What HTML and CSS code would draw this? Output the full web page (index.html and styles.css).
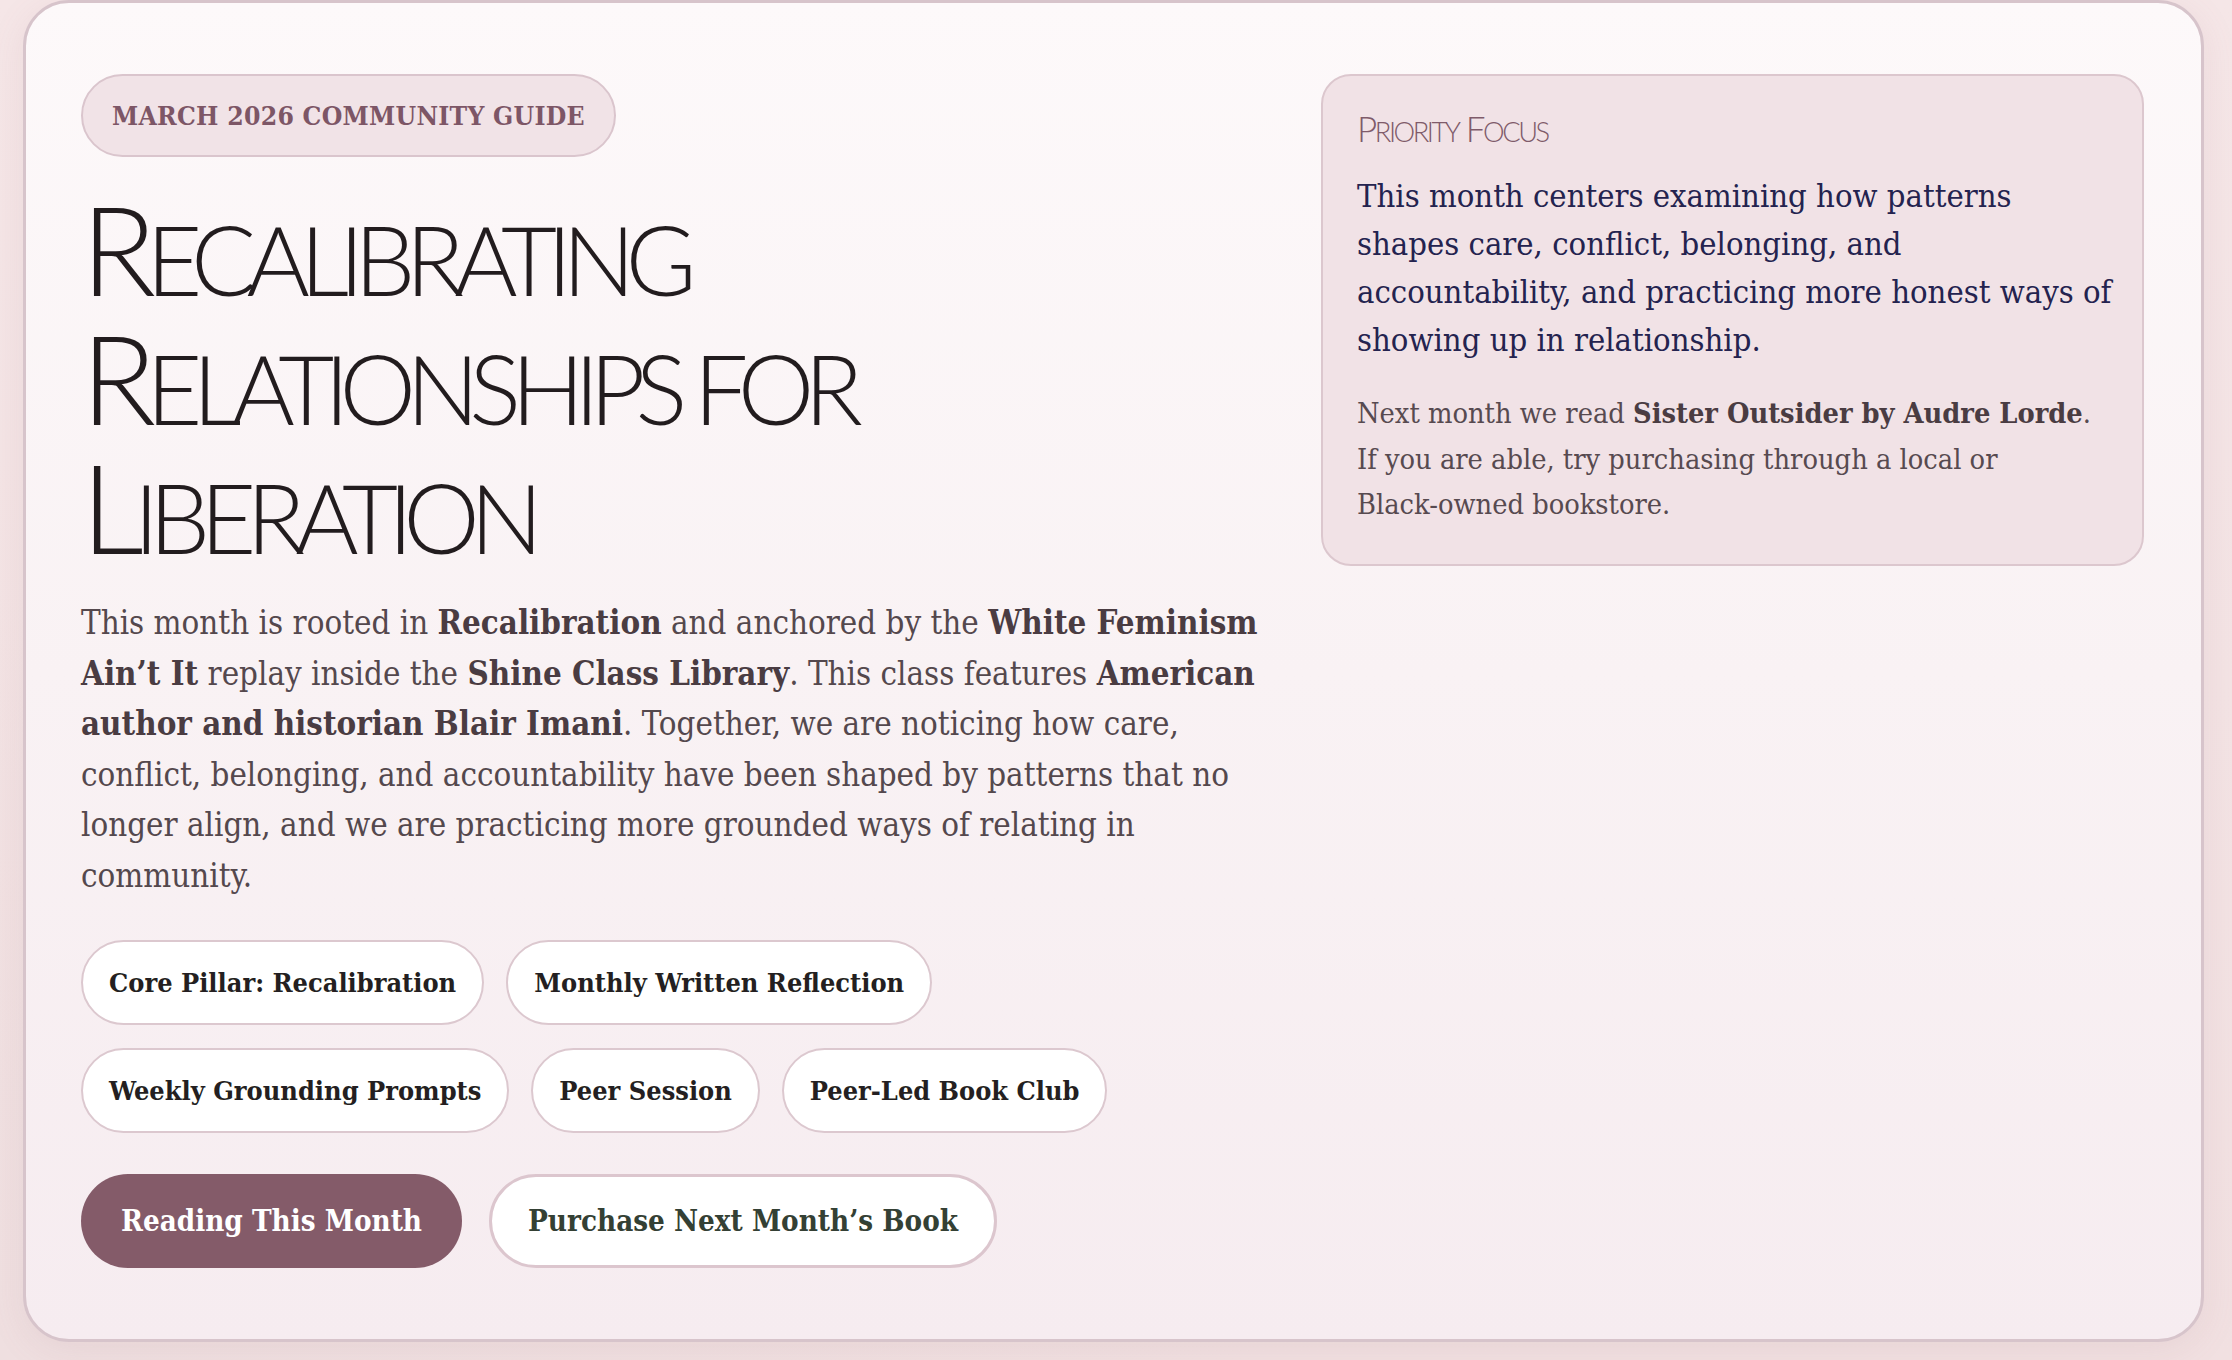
FILE: index.html
```html
<!DOCTYPE html>
<html lang="en">
<head>
<meta charset="utf-8">
<title>March 2026 Community Guide</title>
<link rel="stylesheet" href="styles.css">
</head>
<body>
<div class="page">
  <section class="card">
    <div class="main">
      <span class="eyebrow">March 2026 Community Guide</span>
      <h1 class="title">R<span class="sc">ecalibrating</span> R<span class="sc">elationships for</span> L<span class="sc">iberation</span></h1>
      <p class="lead">This month is rooted in <strong>Recalibration</strong> and anchored by the <strong>White Feminism Ain’t It</strong> replay inside the <strong>Shine Class Library</strong>. This class features <strong>American author and historian Blair Imani</strong>. Together, we are noticing how care, conflict, belonging, and accountability have been shaped by patterns that no longer align, and we are practicing more grounded ways of relating in community.</p>
      <ul class="chips">
        <li class="chip">Core Pillar: Recalibration</li>
        <li class="chip">Monthly Written Reflection</li>
        <li class="chip">Weekly Grounding Prompts</li>
        <li class="chip">Peer Session</li>
        <li class="chip">Peer-Led Book Club</li>
      </ul>
      <div class="actions">
        <a class="btn btn-primary" href="#">Reading This Month</a>
        <a class="btn btn-outline" href="#">Purchase Next Month’s Book</a>
      </div>
    </div>
    <aside class="focus">
      <h2 class="focus-title">P<span class="sc">riority</span> F<span class="sc">ocus</span></h2>
      <p class="focus-text">This month centers examining how patterns shapes care, conflict, belonging, and accountability, and practicing more honest ways of showing up in relationship.</p>
      <p class="focus-note">Next month we read <strong>Sister Outsider by Audre Lorde</strong>. If you are able, try purchasing through a local or <span class="nowrap">Black-owned</span> bookstore.</p>
    </aside>
  </section>
</div>
</body>
</html>
```

FILE: styles.css
```css
* { box-sizing: border-box; }

html, body { margin: 0; padding: 0; }

body {
  min-height: 1360px;
  background:
    radial-gradient(ellipse at 0% 100%, #efdfe0 0%, rgba(239,223,224,0) 40%),
    linear-gradient(180deg, #f5e6e7 0%, #f1e0e1 100%);
  font-family: "DejaVu Serif Condensed", "DejaVu Serif", serif;
  color: #53474c;
}

.page {
  padding: 0 28px 17px 23px;
}

.card {
  display: grid;
  grid-template-columns: 1192px 1fr;
  column-gap: 48px;
  align-items: start;
  padding: 71px 57px 71px 55px;
  border: 3px solid #d7c4cb;
  border-radius: 46px;
  background: linear-gradient(180deg, #fdf9fa 0%, #f9f2f4 50%, #f6ecf0 100%);
  box-shadow: 0 8px 36px rgba(160, 110, 120, 0.10);
}

.main {
  display: flex;
  flex-direction: column;
  align-items: flex-start;
}

.eyebrow {
  display: inline-block;
  height: 83px;
  line-height: 79px;
  padding: 0 29px;
  border: 2px solid #dac5cd;
  border-radius: 999px;
  background: #f1e3e7;
  color: #7d5666;
  font-weight: 700;
  font-size: 26.3px;
  letter-spacing: 0.01em;
  text-transform: uppercase;
}

.title {
  margin: 27px 0 0;
  max-width: 900px;
  font-family: Lato, "Open Sans", sans-serif;
  font-weight: 300;
  font-size: 124px;
  line-height: 129px;
  letter-spacing: -0.08em;
  text-transform: uppercase;
  color: #221c1e;
}

.sc {
  font-size: 0.78em;
  line-height: 0;
}

.nowrap { white-space: nowrap; }

.lead {
  margin: 27px 0 0;
  font-size: 32.8px;
  line-height: 50.6px;
  color: #54484d;
}

.lead strong, .focus-note strong {
  color: #4a3c42;
  font-weight: 700;
}

.chips {
  list-style: none;
  margin: 38px 0 0;
  padding: 0;
  display: flex;
  flex-wrap: wrap;
  gap: 23px 22px;
  max-width: 1100px;
}

.chip {
  height: 85px;
  line-height: 81px;
  padding: 0 26px;
  border: 2px solid #dcc8cf;
  border-radius: 999px;
  background: #ffffff;
  color: #241f21;
  font-weight: 700;
  font-size: 26.9px;
}

.actions {
  margin-top: 41px;
  display: flex;
  gap: 27px;
}

.btn {
  display: inline-block;
  height: 94px;
  border-radius: 999px;
  font-weight: 700;
  font-size: 29.3px;
  text-decoration: none;
}

.btn-primary {
  line-height: 94px;
  padding: 0 40px;
  background: #845b69;
  color: #ffffff;
}

.btn-outline {
  line-height: 88px;
  padding: 0 36px;
  border: 3px solid #dcc6ce;
  background: #ffffff;
  color: #344034;
}

.focus {
  padding: 31px 26px 36px 34px;
  border: 2px solid #dcc7ce;
  border-radius: 30px;
  background: #f1e2e6;
}

.focus-title {
  margin: 0;
  font-family: Lato, "Open Sans", sans-serif;
  font-weight: 300;
  font-size: 35px;
  line-height: 42px;
  letter-spacing: -0.07em;
  text-transform: uppercase;
  color: #7f5b6a;
}

.focus-text {
  margin: 23px 0 0;
  font-size: 32.5px;
  line-height: 48px;
  color: #24234f;
}

.focus-note {
  margin: 27px 0 0;
  font-size: 28.7px;
  line-height: 45.5px;
  color: #574a50;
}
```
